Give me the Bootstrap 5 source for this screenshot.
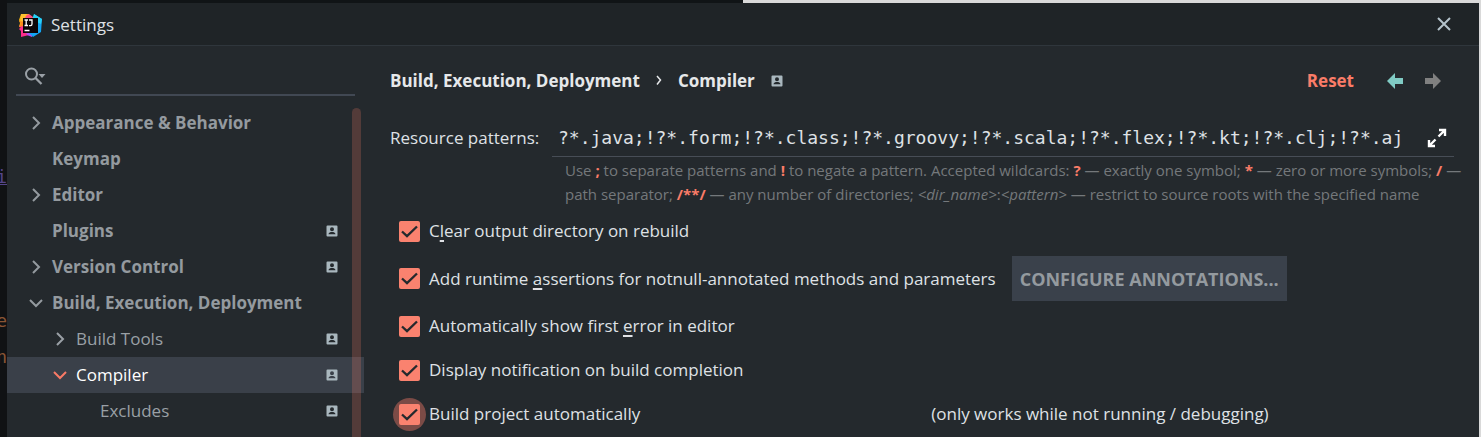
<!DOCTYPE html>
<html lang="en">
<head>
<meta charset="utf-8">
<meta name="viewport" content="width=device-width, initial-scale=1">
<title>Settings</title>
<link href="https://cdn.jsdelivr.net/npm/bootstrap@5.3.0/dist/css/bootstrap.min.css" rel="stylesheet">
<style>
  body {
    font-family: "Open Sans", "Noto Sans", sans-serif;
    font-size: 17px;
    line-height: 24px;
    color: #dfe1e5;
    background: linear-gradient(to right, #101416 50.2%, #d9d9d9 50.2%);
  }
  .backdrop-code {
    width: 7px;
    padding-top: 159px;
    background: #101214;
    font: 18px/36px "DejaVu Sans Mono", monospace;
    color: #8a5534;
    direction: rtl;
  }
  .backdrop-code .field-name { color: #54458a; text-decoration: underline; }
  .dialog { background: #24292d; margin: 3px 2px 0 0; }
  .titlebar { height: 43px; background: #1f2427; border-bottom: 1px solid #2f363c; padding: 2px 27px 0 11px; }
  .plain { background: none; border: 0; padding: 0; color: inherit; }
  .sidebar { width: 357px; }
  .search-box { height: 50px; margin: 0 9px 9px; padding: 12px 8px 0; border-bottom: 2px solid #414853; }
  .search-box input { color: inherit; outline: 0; }
  .tree-row { height: 36px; padding-right: 26px; color: #9aa0a6; text-decoration: none; }
  .tree-row.top-level { font-weight: 700; color: #949a9f; }
  .tree-row.active { background: #3a4049; color: #fff; }
  .tree-row.active .arrow { color: #f97a66; }
  .arrow { width: 16px; height: 16px; margin: 0 8px 0 21px; }
  .level-2 .arrow { margin-left: 45px; }
  .level-3 .arrow { margin-left: 69px; }
  .project-mark { width: 12px; height: 12px; color: #a9b7be; }
  .scroll-thumb { width: 9px; top: 62px; right: 3px; background: rgba(249, 122, 102, .22); border-radius: 5px 5px 0 0; }
  .content { padding: 23px 25px 0 26px; }
  .crumbs { font-weight: 700; height: 24px; padding-right: 8px; color: #e6e8ea; }
  .reset { color: #fa7c68; text-decoration: none; }
  .pattern-row { margin-top: 27px; }
  .pattern-row label { width: 162px; padding-top: 6px; }
  .pattern-box { height: 37px; border-bottom: 1px solid #474d56; padding: 0 7px 0 6px; }
  .pattern-box input { font: 18px/36px "DejaVu Sans Mono", monospace; color: #dfe1e5; outline: 0; }
  .hint { font-size: 15px; color: #74787b; padding: 1px 0 0 13px; margin-right: -12px; }
  .hint b { color: #fa7c68; }
  .options { padding: 13px 0 0 9px; }
  .option { height: 24px; }
  .option-wide { margin: 13px 0; }
  .option-spaced { margin: 20px 0; }
  .option .form-check-input {
    width: 21px; height: 21px; margin: 0; border: 0; border-radius: 2px;
    background-color: #fa826f;
    background-size: 21px 21px;
    background-image: url("data:image/svg+xml,%3Csvg xmlns='http://www.w3.org/2000/svg' viewBox='0 0 21 21'%3E%3Cpath d='M3 10.500l5 4.700L18 5.500' fill='none' stroke='%2324292d' stroke-width='2.300'/%3E%3C/svg%3E");
  }
  .option label { margin-left: 9px; }
  .option u { text-underline-offset: 3px; text-decoration-thickness: 2px; }
  .halo-wrap { position: relative; }
  .halo-wrap::before { content: ""; position: absolute; inset: -6px; border-radius: 50%; background: #7c4b46; }
  .halo-wrap input { position: relative; }
  .configure { height: 45px; margin-left: 16px; padding: 0 8px; border: 0; border-radius: 0; background: #3a414b; color: #949a9f; font-size: 18px; font-weight: 700; }
  .note { margin-left: 291px; }
</style>
</head>
<body>
<svg class="d-none">
  <symbol id="right" viewBox="0 0 16 16"><path d="M5 2l6 6-6 6" fill="none" stroke="currentColor" stroke-width="2"/></symbol>
  <symbol id="down" viewBox="0 0 16 16"><path d="M2 5l6 6 6-6" fill="none" stroke="currentColor" stroke-width="2"/></symbol>
  <symbol id="person" viewBox="0 0 12 12"><path fill="currentColor" fill-rule="evenodd" d="M1.500 .5h9a1 1 0 0 1 1 1v9a1 1 0 0 1-1 1h-9a1 1 0 0 1-1-1v-9a1 1 0 0 1 1-1zM6 2.200a2 2 0 1 0 0 4 2 2 0 0 0 0-4zM2.500 9.200h7C9.500 7.700 7.500 7.100 6 7.100S2.500 7.700 2.500 9.200z"/></symbol>
</svg>
<div class="d-flex min-vh-100">
  <div class="backdrop-code flex-shrink-0 overflow-hidden" aria-hidden="true">
    <div class="field-name">i</div>
    <div>&nbsp;</div><div>&nbsp;</div><div>&nbsp;</div>
    <div>e</div>
    <div>n</div>
  </div>
  <div class="dialog d-flex flex-column flex-grow-1">
    <header class="titlebar d-flex align-items-center">
      <svg width="25" height="25" viewBox="0 0 25 25" aria-hidden="true">
        <path fill="#fdb60d" d="M3 1l8 0 1 10-11 3 1-4-1-3z"/>
        <path fill="#ff4f7b" d="M7 3l4-2 4 3-1 8-9 3-4-1 4-5z"/>
        <path fill="#fdc02f" d="M3 1l6 0-4 8-3 1 1-4z"/>
        <path fill="#ff8a1e" d="M1 8l6 1 0 6-6-2 2-2z"/>
        <path fill="#fe2d8b" d="M4 13l8 5-1 4-8 2 0-6-2-2z"/>
        <path fill="#b24df0" d="M8 19l6 1 0 4-5-2z"/>
        <path fill="#12a5f4" d="M16 1l8 5-1 13-8 5-4-4 4-12z"/>
        <path fill="#28d0f4" d="M16 1l8 5-1 5-9-4z"/>
        <path fill="#0b0507" d="M5 5h15v15H5z"/>
        <path fill="none" stroke="#fff" stroke-width="1.300" d="M6.500 7h3.500M8.200 7v5.500M6.500 12.500h3.500M11 7h3v4q0 1.600-1.500 1.600H11M6.500 17.500h5"/>
      </svg>
      <span class="ms-2 flex-grow-1">Settings</span>
      <button class="plain d-flex" type="button" aria-label="Close">
        <svg width="16" height="16" viewBox="0 0 16 16"><path d="M2 1l12 12M14 1L2 13" stroke="#b4c3cb" stroke-width="2"/></svg>
      </button>
    </header>
    <div class="d-flex flex-grow-1">
      <nav class="sidebar position-relative flex-shrink-0" aria-label="Settings categories">
        <div class="search-box d-flex align-items-center">
          <svg width="22" height="20" viewBox="0 0 22 20" class="flex-shrink-0" aria-hidden="true">
            <circle cx="7.500" cy="8" r="5.500" fill="none" stroke="#9aa0a6" stroke-width="2"/>
            <path d="M11.500 12l6 6" stroke="#9aa0a6" stroke-width="2.300"/>
            <path d="M14.500 8h7L18 12z" fill="#9aa0a6"/>
          </svg>
          <input class="plain flex-grow-1" type="text" aria-label="Search settings">
        </div>
        <a href="#" class="tree-row top-level d-flex align-items-center"><svg class="arrow"><use href="#right"/></svg>Appearance &amp; Behavior</a>
        <a href="#" class="tree-row top-level d-flex align-items-center"><span class="arrow"></span>Keymap</a>
        <a href="#" class="tree-row top-level d-flex align-items-center"><svg class="arrow"><use href="#right"/></svg>Editor</a>
        <a href="#" class="tree-row top-level d-flex align-items-center"><span class="arrow"></span>Plugins<svg class="project-mark ms-auto"><use href="#person"/></svg></a>
        <a href="#" class="tree-row top-level d-flex align-items-center"><svg class="arrow"><use href="#right"/></svg>Version Control<svg class="project-mark ms-auto"><use href="#person"/></svg></a>
        <a href="#" class="tree-row top-level d-flex align-items-center"><svg class="arrow"><use href="#down"/></svg>Build, Execution, Deployment</a>
        <a href="#" class="tree-row level-2 d-flex align-items-center"><svg class="arrow"><use href="#right"/></svg>Build Tools<svg class="project-mark ms-auto"><use href="#person"/></svg></a>
        <a href="#" class="tree-row level-2 active d-flex align-items-center" aria-current="page"><svg class="arrow"><use href="#down"/></svg>Compiler<svg class="project-mark ms-auto"><use href="#person"/></svg></a>
        <a href="#" class="tree-row level-3 d-flex align-items-center"><span class="arrow"></span>Excludes<svg class="project-mark ms-auto"><use href="#person"/></svg></a>
        <div class="scroll-thumb position-absolute bottom-0"></div>
      </nav>
      <main class="content flex-grow-1">
        <div class="crumbs d-flex align-items-center">
          <span>Build, Execution, Deployment</span>
          <svg class="mx-3" width="6" height="12" viewBox="0 0 6 12" aria-hidden="true"><path d="M1 1l3.500 4L1 9.500" fill="none" stroke="currentColor" stroke-width="1.500"/></svg>
          <span>Compiler</span>
          <svg class="project-mark ms-3 me-auto"><use href="#person"/></svg>
          <a href="#" class="reset">Reset</a>
          <button class="plain d-flex ms-4 ps-2" type="button" aria-label="Back"><svg width="18" height="16" viewBox="0 0 18 16"><path d="M1 8l8-8v5h8v6H9v5z" fill="#80cbc4"/></svg></button>
          <button class="plain d-flex ms-3 ps-1 pe-1" type="button" aria-label="Forward"><svg width="18" height="16" viewBox="0 0 18 16"><path d="M17 8L9 0v5H1v6h8v5z" fill="#808080"/></svg></button>
        </div>
        <div class="pattern-row d-flex">
          <label for="patterns" class="flex-shrink-0">Resource patterns:</label>
          <div class="flex-grow-1">
            <div class="pattern-box d-flex align-items-center">
              <input id="patterns" class="plain flex-grow-1" type="text" value="?*.java;!?*.form;!?*.class;!?*.groovy;!?*.scala;!?*.flex;!?*.kt;!?*.clj;!?*.aj">
              <button class="plain d-flex" type="button" aria-label="Expand"><svg width="20" height="20" viewBox="0 0 20 20"><path d="M12 2H18v6M17 3l-5.500 5.500M2 12V18h6M3 17l5.500-5.500" fill="none" stroke="#fff" stroke-width="2.400"/></svg></button>
            </div>
            <div class="hint">Use <b>;</b> to separate patterns and <b>!</b> to negate a pattern. Accepted wildcards: <b>?</b> — exactly one symbol; <b>*</b> — zero or more symbols; <b>/</b> <span>—</span> <span>path separator;</span> <b>/**/</b> — any number of directories; <i>&lt;dir_name&gt;</i>:<i>&lt;pattern&gt;</i> — restrict to source roots with the specified name</div>
          </div>
        </div>
        <div class="options">
          <div class="option d-flex align-items-center">
            <input class="form-check-input" type="checkbox" id="clear" checked><label for="clear">C<u>l</u>ear output directory on rebuild</label>
          </div>
          <div class="option-wide d-flex align-items-center">
            <div class="option d-flex align-items-center">
              <input class="form-check-input" type="checkbox" id="assertions" checked><label for="assertions">Add runtime <u>a</u>ssertions for notnull-annotated methods and parameters</label>
            </div>
            <button class="configure" type="button">CONFIGURE ANNOTATIONS...</button>
          </div>
          <div class="option d-flex align-items-center">
            <input class="form-check-input" type="checkbox" id="error" checked><label for="error">Automatically show first <u>e</u>rror in editor</label>
          </div>
          <div class="option option-spaced d-flex align-items-center">
            <input class="form-check-input" type="checkbox" id="notify" checked><label for="notify">Display notification on build completion</label>
          </div>
          <div class="option d-flex align-items-center">
            <span class="halo-wrap d-flex"><input class="form-check-input" type="checkbox" id="auto" checked></span><label for="auto">Build project automatically</label>
            <span class="note">(only works while not running / debugging)</span>
          </div>
        </div>
      </main>
    </div>
  </div>
</div>
<script src="https://cdn.jsdelivr.net/npm/bootstrap@5.3.0/dist/js/bootstrap.bundle.min.js"></script>
</body>
</html>
